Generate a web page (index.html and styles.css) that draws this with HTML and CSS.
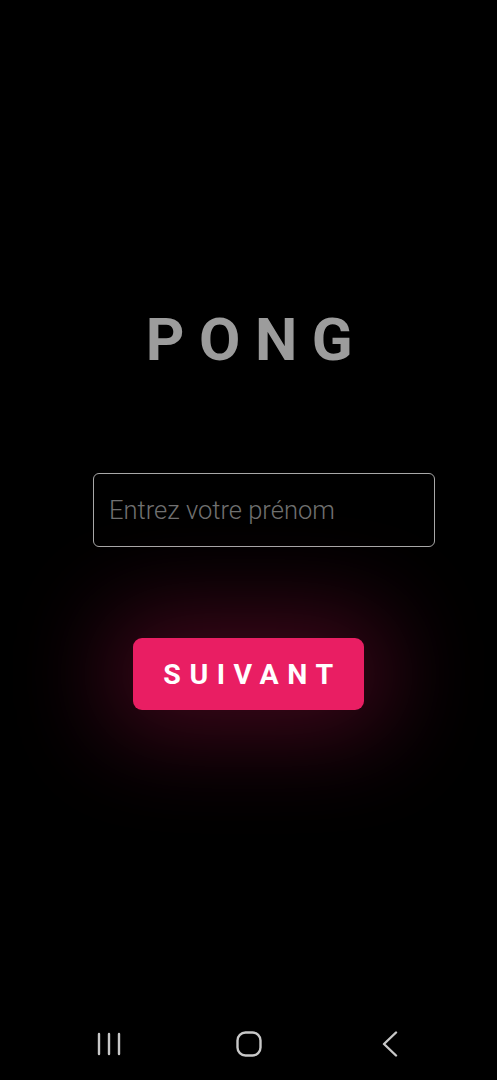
FILE: index.html
```html
<!DOCTYPE html>
<html lang="fr">
<head>
<meta charset="utf-8">
<title>Pong</title>
<link rel="stylesheet" href="styles.css">
</head>
<body>
<main class="screen">
  <h1 class="title">PONG</h1>
  <div class="field">
    <input class="name-input" type="text" placeholder="Entrez votre prénom">
  </div>
  <button class="next-btn" type="button">SUIVANT</button>
</main>
<nav class="navbar">
  <span class="nav-item">
    <svg width="26" height="26" viewBox="0 0 26 26" fill="none" stroke="#c8c8c8" stroke-width="2.4" stroke-linecap="round">
      <line x1="3" y1="3" x2="3" y2="23"/>
      <line x1="13" y1="3" x2="13" y2="23"/>
      <line x1="23" y1="3" x2="23" y2="23"/>
    </svg>
  </span>
  <span class="nav-item">
    <svg width="26" height="26" viewBox="0 0 26 26" fill="none" stroke="#c8c8c8" stroke-width="2.4">
      <rect x="1.5" y="1.5" width="23" height="23" rx="8"/>
    </svg>
  </span>
  <span class="nav-item">
    <svg width="26" height="26" viewBox="0 0 26 26" fill="none" stroke="#c8c8c8" stroke-width="2.4" stroke-linecap="round" stroke-linejoin="round">
      <polyline points="20,1.5 8,13 20,24.5"/>
    </svg>
  </span>
</nav>
</body>
</html>
```
FILE: styles.css
```css
html, body {
  margin: 0;
  padding: 0;
  background: #000;
}
body {
  width: 497px;
  height: 1080px;
  display: flex;
  flex-direction: column;
  font-family: Roboto, "Liberation Sans", sans-serif;
  overflow: hidden;
}
.screen {
  flex: 1;
  display: flex;
  flex-direction: column;
  padding-top: 310px;
}
.title {
  margin: 0;
  font-size: 60px;
  line-height: 1;
  font-weight: 700;
  color: #9c9c9c;
  letter-spacing: 14.5px;
  padding-left: 16px;
  text-align: center;
}
.field {
  margin-top: 103px;
  padding-left: 93px;
}
.name-input {
  box-sizing: border-box;
  width: 342px;
  height: 74px;
  background: #000;
  border: 1.5px solid #a8a8a8;
  border-radius: 6px;
  padding: 0 15px;
  font-family: Roboto, "Liberation Sans", sans-serif;
  font-weight: 300;
  font-size: 25.5px;
  color: #ddd;
  outline: none;
}
.name-input::placeholder {
  color: #707070;
}
.next-btn {
  align-self: center;
  margin-top: 91px;
  width: 231px;
  height: 72px;
  border: none;
  border-radius: 9px;
  background: #e91e63;
  color: #fff;
  font-family: Roboto, "Liberation Sans", sans-serif;
  font-weight: 700;
  font-size: 28.5px;
  letter-spacing: 8.5px;
  padding: 0 0 0 8px;
  box-shadow: 0 0 95px 25px rgba(233, 30, 99, 0.28);
}
.navbar {
  height: 74px;
  display: flex;
  justify-content: center;
  align-items: flex-start;
  gap: 114px;
  padding-top: 25px;
  box-sizing: border-box;
}
.nav-item {
  width: 26px;
  height: 26px;
  display: flex;
}
```
